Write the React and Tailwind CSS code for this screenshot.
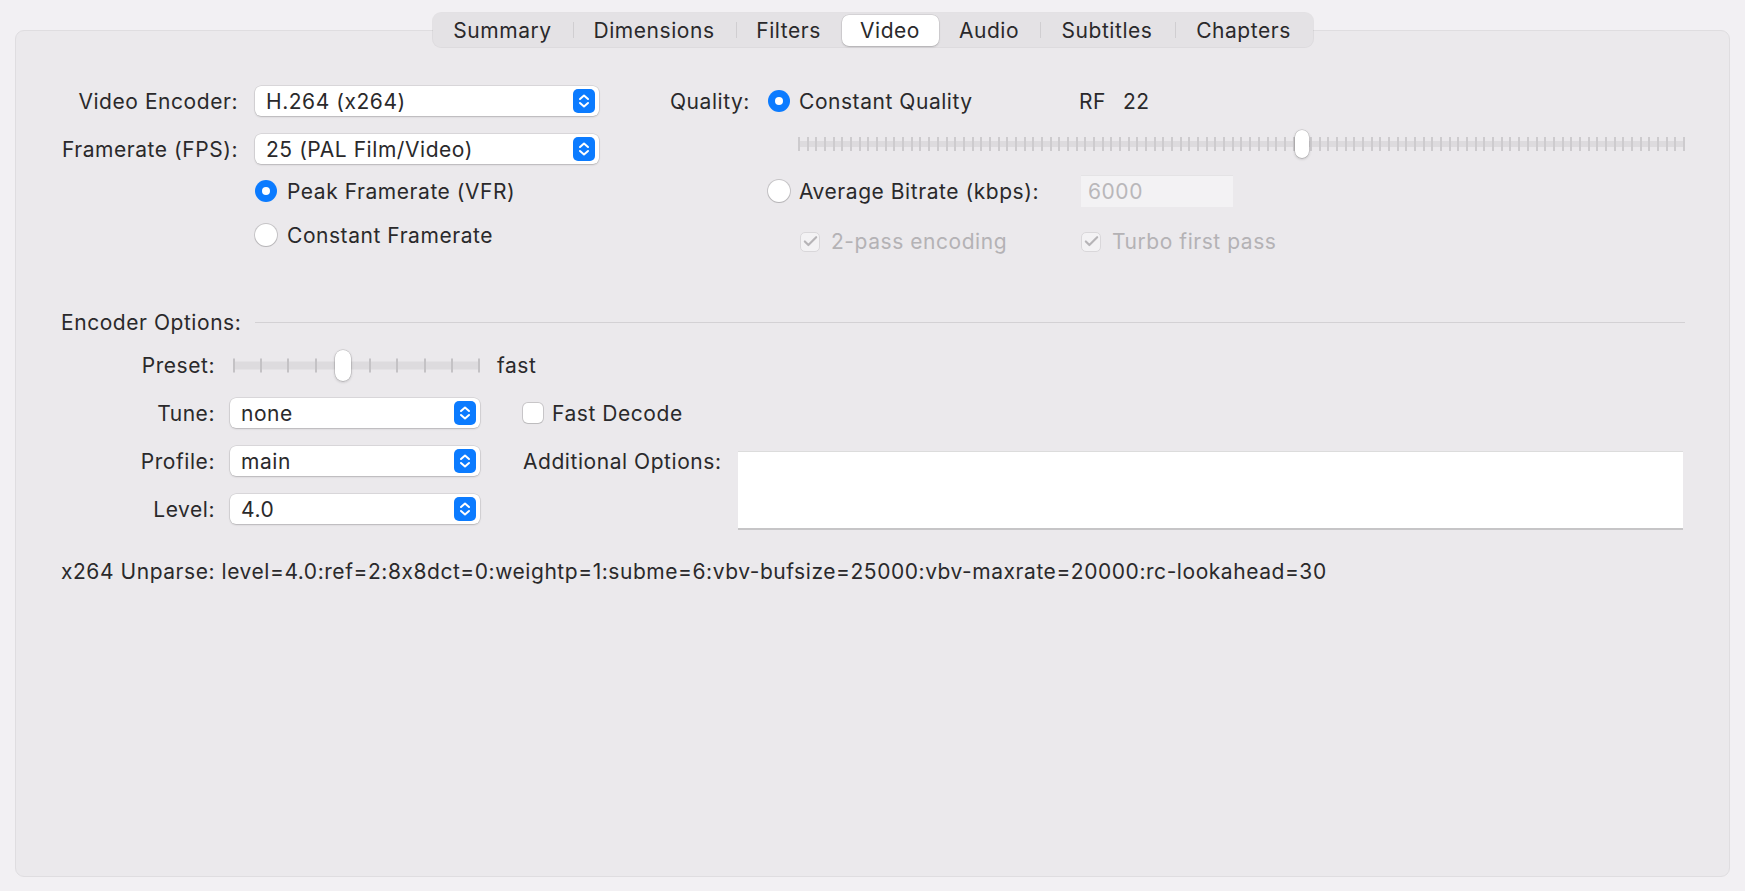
import { Check } from 'lucide-react';

const tabs = [
  { name: 'Summary', w: 'w-[140px]' },
  { name: 'Dimensions', w: 'w-[163px]' },
  { name: 'Filters', w: 'w-[106px]' },
  { name: 'Video', w: 'w-[97px]', active: true },
  { name: 'Audio', w: 'w-[101px]' },
  { name: 'Subtitles', w: 'w-[135px]' },
  { name: 'Chapters', w: 'w-[138px]' },
];

const Stepper = () => (
  <svg width="22" height="24" viewBox="0 0 22 24">
    <rect x="0" y="0" width="22" height="24" rx="5" fill="#0b7bff" />
    <path d="M7 10 L11 6.5 L15 10" fill="none" stroke="white" strokeWidth="2" strokeLinecap="round" strokeLinejoin="round" />
    <path d="M7 14 L11 17.5 L15 14" fill="none" stroke="white" strokeWidth="2" strokeLinecap="round" strokeLinejoin="round" />
  </svg>
);

const Popup = ({ value, className = '' }) => (
  <div className={`flex h-[30px] shrink-0 items-center justify-between rounded-[6px] bg-white pl-[11px] pr-[4px] shadow-[0_0_0_0.5px_rgba(0,0,0,0.14),0_1px_2px_rgba(0,0,0,0.16)] ${className}`}>
    <span>{value}</span>
    <Stepper />
  </div>
);

const Radio = ({ on }) =>
  on ? (
    <span className="flex h-[22px] w-[22px] shrink-0 items-center justify-center rounded-full bg-[#0b7bff]">
      <span className="h-[8px] w-[8px] rounded-full bg-white" />
    </span>
  ) : (
    <span className="h-[22px] w-[22px] shrink-0 rounded-full bg-white shadow-[0_0_0_1px_rgba(0,0,0,0.16),0_1px_1px_rgba(0,0,0,0.08)]" />
  );

const DisabledCheck = () => (
  <span className="flex h-[20px] w-[20px] shrink-0 items-center justify-center rounded-[5px] border border-[#d9d7da] bg-[#f3f2f4]">
    <Check className="h-[17px] w-[17px] text-[#b6b4b7]" strokeWidth={3} />
  </span>
);

// tick slider: track drawn as svg, knob on top of it
const TickSlider = ({ width, ticks, pos, trackH, knobW, knobH, tickColor = '#cdcbce' }) => {
  const step = (width - 2) / (ticks - 1);
  const mid = knobH / 2;
  return (
    <div className="relative shrink-0" style={{ width, height: knobH }}>
      <svg width={width} height={knobH} className="block">
        <rect x="0" y={mid - trackH / 2} width={width} height={trackH} rx="1" fill="#dddbde" />
        {Array.from({ length: ticks }).map((_, i) => (
          <rect key={i} x={Math.round(i * step)} y={mid - 7} width="2" height="14" fill={tickColor} />
        ))}
      </svg>
      <div
        className="absolute top-0 rounded-full bg-white shadow-[0_0_0_0.5px_rgba(0,0,0,0.18),0_1px_3px_rgba(0,0,0,0.22)]"
        style={{ left: 1 + pos * step - knobW / 2, width: knobW, height: knobH }}
      />
    </div>
  );
};

export default function App() {
  return (
    <div className="flex min-h-[891px] flex-col items-center bg-[#f2f0f3] pt-[13px] font-['Inter','Liberation_Sans',sans-serif] text-[21px] leading-none tracking-[0.55px] text-[#2a292b] [font-feature-settings:'calt'_0]">
      {/* tab bar */}
      <div className="relative z-10 flex h-[34px] w-[880px] items-center rounded-[8px] bg-[#e4e2e5] shadow-[0_0_0_1px_rgba(0,0,0,0.06)]">
        {tabs.map((t, i) => {
          const prev = tabs[i - 1];
          const sep = i > 0 && !t.active && !prev.active;
          return (
            <div key={t.name} className={`relative flex h-full items-center justify-center ${t.w}`}>
              {sep && <span className="absolute left-0 top-[9px] h-[16px] w-px bg-[#d0ced1]" />}
              {t.active ? (
                <span className="flex h-[31px] w-full items-center justify-center rounded-[7px] bg-white shadow-[0_0_0_0.5px_rgba(0,0,0,0.12),0_1px_2px_rgba(0,0,0,0.18)]">
                  {t.name}
                </span>
              ) : (
                <span>{t.name}</span>
              )}
            </div>
          );
        })}
      </div>

      {/* panel */}
      <div className="-mt-[17px] h-[847px] w-[1715px] rounded-[9px] border border-[#dfdde0] bg-[#ebe9ec] pl-[45px] pr-[44px] pt-[55px]">
        <div className="flex">
          {/* left column */}
          <div className="flex w-[610px] flex-col">
            <div className="flex items-center">
              <span className="w-[177px] shrink-0 whitespace-nowrap text-right">Video Encoder:</span>
              <Popup value="H.264 (x264)" className="ml-[17px] w-[344px]" />
            </div>
            <div className="mt-[18px] flex items-center">
              <span className="w-[177px] shrink-0 whitespace-nowrap text-right">Framerate (FPS):</span>
              <Popup value="25 (PAL Film/Video)" className="ml-[17px] w-[344px]" />
            </div>
            <div className="ml-[194px] mt-[16px] flex items-center gap-[10px]">
              <Radio on />
              <span>Peak Framerate (VFR)</span>
            </div>
            <div className="ml-[194px] mt-[22px] flex items-center gap-[10px]">
              <Radio />
              <span>Constant Framerate</span>
            </div>
          </div>

          {/* right column */}
          <div className="grid grid-cols-[98px_auto]">
            <div className="flex h-[30px] items-center">Quality:</div>
            <div className="flex h-[30px] items-center">
              <Radio on />
              <span className="ml-[9px] w-[280px]">Constant Quality</span>
              <span>RF</span>
              <span className="ml-[17px]">22</span>
            </div>
            <div className="col-start-2 ml-[30px] mt-[14px]">
              <TickSlider width={887} ticks={103} pos={58} trackH={6} knobW={14} knobH={28} />
            </div>
            <div className="col-start-2 mt-[17px] flex h-[32px] items-center">
              <Radio />
              <span className="ml-[9px] w-[282px]">Average Bitrate (kbps):</span>
              <span className="flex h-[32px] w-[152px] items-center bg-[#f3f2f4] px-[7px] text-[#b9b7ba] shadow-[inset_0_1px_0_rgba(0,0,0,0.06)]">
                6000
              </span>
            </div>
            <div className="col-start-2 ml-[32px] mt-[24px] flex items-center text-[#b4b2b5]">
              <DisabledCheck />
              <span className="ml-[11px] w-[250px]">2-pass encoding</span>
              <DisabledCheck />
              <span className="ml-[11px]">Turbo first pass</span>
            </div>
          </div>
        </div>

        {/* encoder options */}
        <div className="mt-[58px] flex h-[24px] items-center">
          <span>Encoder Options:</span>
          <span className="ml-[14px] h-px flex-1 bg-[#d3d1d4]" />
        </div>

        <div className="flex">
          <div className="flex w-[419px] shrink-0 flex-col">
            <div className="mt-[15px] flex h-[32px] items-center">
              <span className="w-[154px] shrink-0 text-right">Preset:</span>
              <span className="ml-[18px] shrink-0">
                <TickSlider width={247} ticks={10} pos={4} trackH={8} knobW={16} knobH={31} tickColor="#c4c2c5" />
              </span>
              <span className="ml-[17px] shrink-0">fast</span>
            </div>
            <div className="mt-[17px] flex items-center">
              <span className="w-[154px] shrink-0 text-right">Tune:</span>
              <Popup value="none" className="ml-[15px] w-[250px]" />
            </div>
            <div className="mt-[18px] flex items-center">
              <span className="w-[154px] shrink-0 text-right">Profile:</span>
              <Popup value="main" className="ml-[15px] w-[250px]" />
            </div>
            <div className="mt-[18px] flex items-center">
              <span className="w-[154px] shrink-0 text-right">Level:</span>
              <Popup value="4.0" className="ml-[15px] w-[250px]" />
            </div>
          </div>

          <div className="ml-[43px] flex flex-1 flex-col pt-[64px]">
            <div className="flex h-[30px] items-center">
              <span className="h-[20px] w-[20px] rounded-[5px] bg-white shadow-[0_0_0_1px_rgba(0,0,0,0.15),0_1px_1px_rgba(0,0,0,0.06)]" />
              <span className="ml-[9px]">Fast Decode</span>
            </div>
            <div className="mt-[23px] flex">
              <span className="flex h-[20px] w-[198px] shrink-0 items-center whitespace-nowrap">Additional Options:</span>
              <div className="ml-[17px] mr-[2px] h-[79px] flex-1 border-b-2 border-t border-b-[#c6c5c7] border-t-[#dcdcdc] bg-white" />
            </div>
          </div>
        </div>

        <div className="mt-[31px]">
          x264 Unparse: level=4.0:ref=2:8x8dct=0:weightp=1:subme=6:vbv-bufsize=25000:vbv-maxrate=20000:rc-lookahead=30
        </div>
      </div>
    </div>
  );
}
